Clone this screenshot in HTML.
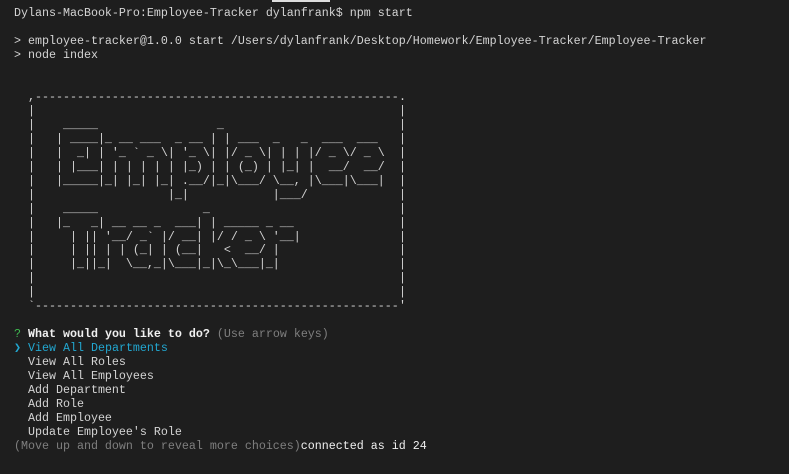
<!DOCTYPE html>
<html><head><meta charset="utf-8"><style>
html,body{margin:0;padding:0;background:#1e1e1e;width:789px;height:474px;overflow:hidden}
pre{margin:0;position:absolute;top:7px;font-family:"Liberation Mono",monospace;font-size:11.67px;line-height:13.97px;color:#d4d4d4}
#m{left:14px}
#r{left:399px}
.g{color:#3fb950}.b{font-weight:bold;color:#f0f0f0}.d{color:#7f7f7f}.c{color:#22a7d0}
#bar{position:absolute;left:272px;top:0;width:58px;height:2px;background:#ddd}
</style></head><body>
<div id="bar"></div>
<pre id="m">Dylans-MacBook-Pro:Employee-Tracker dylanfrank$ npm start

&gt; employee-tracker@1.0.0 start /Users/dylanfrank/Desktop/Homework/Employee-Tracker/Employee-Tracker
&gt; node index


  ,----------------------------------------------------
  |
  |    _____                 _
  |   | ____|_ __ ___  _ __ | | ___  _   _  ___  ___
  |   |  _| | '_ ` _ \| '_ \| |/ _ \| | | |/ _ \/ _ \
  |   | |___| | | | | | |_) | | (_) | |_| |  __/  __/
  |   |_____|_| |_| |_| .__/|_|\___/ \__, |\___|\___|
  |                   |_|            |___/
  |    _____               _
  |   |_   _| __ __ _  ___| | _____ _ __
  |     | || '__/ _` |/ __| |/ / _ \ '__|
  |     | || | | (_| | (__|   &lt;  __/ |
  |     |_||_|  \__,_|\___|_|\_\___|_|
  |
  |
  `----------------------------------------------------

<span class="g">?</span> <span class="b">What would you like to do?</span> <span class="d">(Use arrow keys)</span>
<span class="c">❯ View All Departments</span>
  View All Roles
  View All Employees
  Add Department
  Add Role
  Add Employee
  Update Employee's Role
<span class="d">(Move up and down to reveal more choices)</span><span style="color:#f0f0f0">connected as id 24</span></pre>
<pre id="r">






.
|
|
|
|
|
|
|
|
|
|
|
|
|
|
'</pre>
</body></html>
